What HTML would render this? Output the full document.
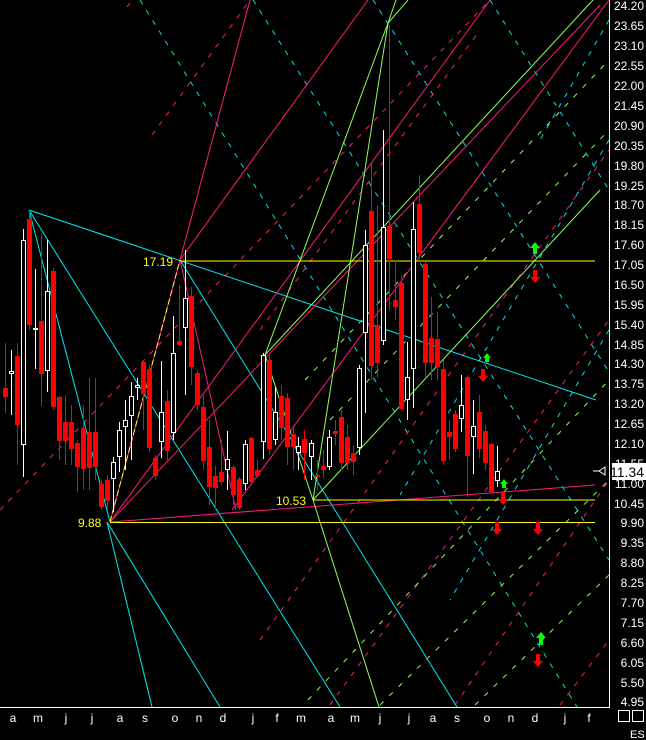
<!DOCTYPE html>
<html><head><meta charset="utf-8"><style>
html,body{margin:0;padding:0;background:#000;width:646px;height:740px;overflow:hidden}
svg{display:block}
text{font-family:"Liberation Sans",sans-serif}
</style></head><body>
<svg width="646" height="740" viewBox="0 0 646 740" xmlns="http://www.w3.org/2000/svg">
<rect width="646" height="740" fill="#000"/>
<g fill="none" stroke-width="1">
<!-- cyan dashed grid -->
<g stroke="#00e0e8" stroke-dasharray="5,7">
<line x1="140" y1="0" x2="577" y2="707"/>
<line x1="253" y1="0" x2="609" y2="560"/>
<line x1="373" y1="0" x2="609" y2="372"/>
<line x1="490" y1="0" x2="609" y2="190"/>
<line x1="609" y1="140" x2="400" y2="495"/>
<line x1="609" y1="330" x2="450" y2="600"/>
<line x1="609" y1="20" x2="540" y2="140"/>
</g>
<!-- pink dashed -->
<g stroke="#ff1a7a" stroke-dasharray="5,7">
<line x1="127" y1="7" x2="155" y2="-30"/>
<line x1="152" y1="135" x2="250" y2="0"/>
<line x1="0" y1="510" x2="490" y2="0"/>
<line x1="260" y1="640" x2="609" y2="150"/>
<line x1="330" y1="705" x2="609" y2="320"/>
<line x1="455" y1="705" x2="609" y2="480"/>
<line x1="560" y1="705" x2="609" y2="640"/>
<line x1="260" y1="330" x2="480" y2="30"/>
</g>
<!-- green dashed -->
<g stroke="#8cff5a" stroke-dasharray="5,8">
<line x1="308" y1="700" x2="609" y2="380"/>
<line x1="380" y1="705" x2="609" y2="480"/>
<line x1="475" y1="705" x2="609" y2="575"/>
<line x1="305" y1="380" x2="609" y2="60"/>
<line x1="330" y1="420" x2="609" y2="130"/>
</g>
<!-- cyan solid -->
<g stroke="#00e8f0">
<line x1="29" y1="210" x2="596" y2="400"/>
<line x1="29" y1="210" x2="110" y2="522"/>
<line x1="29" y1="210" x2="340" y2="707"/>
<line x1="107" y1="522" x2="152" y2="707"/>
<line x1="107" y1="522" x2="220" y2="707"/>
<line x1="180" y1="260" x2="457" y2="707"/>
</g>
<!-- pink solid -->
<g stroke="#ff1a7a">
<line x1="180" y1="260" x2="250" y2="0"/>
<line x1="180" y1="260" x2="368" y2="0"/>
<line x1="110" y1="522" x2="490" y2="0"/>
<line x1="232" y1="510" x2="609" y2="0"/>
<line x1="110" y1="522" x2="600" y2="5"/>
<line x1="110" y1="522" x2="595" y2="485"/>
<line x1="180" y1="260" x2="236" y2="510"/>
<line x1="110" y1="522" x2="180" y2="260"/>
</g>
<!-- green solid -->
<g stroke="#8cff5a">
<line x1="388" y1="23" x2="313" y2="500"/>
<line x1="388" y1="23" x2="265" y2="355"/>
<line x1="265" y1="355" x2="593" y2="0"/>
<line x1="313" y1="500" x2="600" y2="190"/>
<line x1="313" y1="500" x2="379" y2="707"/>
<line x1="388" y1="23" x2="396" y2="0"/>
<line x1="388" y1="23" x2="408" y2="0"/>
<line x1="265" y1="355" x2="313" y2="500"/>
</g>
<line x1="110" y1="522" x2="180" y2="260" stroke="#ffff40" stroke-dasharray="6,3"/>
<!-- yellow horizontals -->
<g stroke="#ffff00">
<line x1="180" y1="261" x2="595" y2="261"/>
<line x1="313" y1="500" x2="595" y2="500"/>
<line x1="110" y1="522.5" x2="595" y2="522.5"/>
</g>
</g>
<!-- candles -->
<g id="c" shape-rendering="crispEdges"></g>
<g shape-rendering="crispEdges">
<!-- white frame -->
<rect x="609" y="0" width="1" height="708" fill="#fff"/>
<rect x="0" y="707" width="610" height="1" fill="#fff"/>
</g>
<!-- arrows -->
<g>
<polygon points="535,242 530,248 533,248 533,254 537,254 537,248 540,248" fill="#00ff00"/>
<polygon points="535,283 530,277 533,277 533,270 537,270 537,277 540,277" fill="#ff0000"/>
<polygon points="487,353 483,358 485,358 485,362 489,362 489,358 491,358" fill="#00ff00"/>
<polygon points="483,382 478,376 481,376 481,369 485,369 485,376 488,376" fill="#ff0000"/>
<polygon points="504,479 500,484 502,484 502,488 506,488 506,484 508,484" fill="#00ff00"/>
<polygon points="503,505 498,499 501,499 501,492 505,492 505,499 508,499" fill="#ff0000"/>
<polygon points="497,535 492,529 495,529 495,522 499,522 499,529 502,529" fill="#ff0000"/>
<polygon points="538,535 533,529 536,529 536,522 540,522 540,529 543,529" fill="#ff0000"/>
<polygon points="541,632 536,638 539,638 539,645 543,645 543,638 546,638" fill="#00ff00"/>
<polygon points="538,667 533,661 536,661 536,654 540,654 540,661 543,661" fill="#ff0000"/>
</g>
<!-- labels -->
<g fill="#ffff00" font-size="12">
<text x="143" y="266">17.19</text>
<text x="78" y="527">9.88</text>
<text x="276" y="505">10.53</text>
</g>
<g fill="#fff" font-size="12" text-anchor="end">
<text x="644" y="10">24.20</text><text x="644" y="30">23.65</text><text x="644" y="50">23.10</text>
<text x="644" y="70">22.55</text><text x="644" y="90">22.00</text><text x="644" y="110">21.45</text>
<text x="644" y="130">20.90</text><text x="644" y="150">20.35</text><text x="644" y="170">19.80</text>
<text x="644" y="190">19.25</text><text x="644" y="209">18.70</text><text x="644" y="229">18.15</text>
<text x="644" y="249">17.60</text><text x="644" y="269">17.05</text><text x="644" y="289">16.50</text>
<text x="644" y="309">15.95</text><text x="644" y="329">15.40</text><text x="644" y="349">14.85</text>
<text x="644" y="368">14.30</text><text x="644" y="388">13.75</text><text x="644" y="408">13.20</text>
<text x="644" y="428">12.65</text><text x="644" y="448">12.10</text><text x="644" y="468">11.55</text>
<text x="644" y="488">11.00</text><text x="644" y="508">10.45</text><text x="644" y="527">9.90</text>
<text x="644" y="547">9.35</text><text x="644" y="567">8.80</text><text x="644" y="587">8.25</text>
<text x="644" y="607">7.70</text><text x="644" y="627">7.15</text><text x="644" y="647">6.60</text>
<text x="644" y="667">6.05</text><text x="644" y="687">5.50</text><text x="644" y="706">4.95</text>
</g>
<rect x="612" y="463" width="34" height="17" fill="#fff"/>
<text x="644" y="477" font-size="14" text-anchor="end" fill="#000">11.34</text>
<line x1="593" y1="471" x2="599" y2="471" stroke="#fff"/>
<polygon points="599,471 605,467 605,475" fill="none" stroke="#fff"/>
<rect x="618.5" y="710.5" width="11" height="11" fill="none" stroke="#fff"/>
<rect x="632.5" y="710.5" width="11" height="11" fill="none" stroke="#fff"/>
<text x="630" y="738" font-size="11" fill="#fff">ES</text>
<g fill="#fff" font-size="12" text-anchor="middle">
<text x="13" y="722">a</text><text x="38" y="722">m</text><text x="66" y="722">j</text>
<text x="92" y="722">j</text><text x="120" y="722">a</text><text x="145" y="722">s</text>
<text x="175" y="722">o</text><text x="199" y="722">n</text><text x="223" y="722">d</text>
<text x="253" y="722">j</text><text x="277" y="722">f</text><text x="301" y="722">m</text>
<text x="331" y="722">a</text><text x="355" y="722">m</text><text x="380" y="722">j</text>
<text x="409" y="722">j</text><text x="433" y="722">a</text><text x="457" y="722">s</text>
<text x="487" y="722">o</text><text x="511" y="722">n</text><text x="535" y="722">d</text>
<text x="565" y="722">j</text><text x="589" y="722">f</text>
</g>
</svg>
<script>
var d=[
[3,388,397,0,343,413],[9,371,374,1,350,415],[15,356,425,0,343,465],[21,240,445,1,229,477],
[27,219,325,0,210,330],[33,328,329,1,269,369],[39,321,374,0,234,406],[45,291,371,1,240,392],
[51,271,407,0,268,410],[57,397,441,0,396,460],[63,422,441,0,395,465],[69,422,449,0,405,465],
[75,443,467,0,440,492],[81,428,469,0,405,490],[87,432,468,0,378,490],[93,432,467,0,378,480],
[99,484,507,0,480,510],[105,480,501,0,475,510],[111,462,479,1,457,512],[117,430,457,1,422,472],
[123,420,427,1,400,470],[129,396,416,1,382,460],[135,385,388,1,378,400],[141,362,394,0,360,430],
[147,369,448,0,365,452],[153,458,476,0,455,480],[159,412,442,1,361,458],[165,401,451,0,390,460],
[171,353,433,1,316,440],[177,341,345,0,285,346],[183,298,328,1,250,395],[189,296,367,0,287,385],
[195,373,405,0,370,410],[201,407,461,0,395,470],[207,447,487,0,420,505],[213,476,488,0,466,510],
[219,472,482,0,440,485],[225,459,470,1,431,490],[231,467,495,0,465,505],[237,479,508,0,477,510],
[243,444,484,1,440,490],[249,438,482,0,437,485],[255,470,476,0,460,478],[261,355,442,1,353,459],
[267,360,449,0,355,455],[273,412,440,1,387,445],[279,396,428,0,385,440],[285,398,447,0,393,465],
[291,434,447,0,425,470],[296,446,453,1,437,470],[302,439,453,0,430,480],[309,443,457,1,440,480],
[315,475,477,0,460,490],[321,466,470,0,450,478],[327,437,467,1,430,470],[333,431,434,0,420,445],
[339,417,463,0,410,470],[345,437,463,0,425,470],[351,453,462,0,445,475],[357,368,448,1,365,455],
[363,245,333,1,230,413],[369,211,366,0,163,380],[375,325,363,0,205,378],[381,227,341,1,130,345],
[387,226,259,0,25,310],[393,300,307,0,260,320],[399,283,409,0,275,410],[405,377,400,1,342,420],
[411,229,369,1,202,408],[417,204,253,0,175,260],[423,264,363,0,262,378],[429,338,363,0,297,380],
[435,339,367,0,312,380],[441,369,461,0,360,465],[447,432,437,0,420,460],[453,414,449,0,410,452],
[459,405,419,1,375,432],[465,377,456,0,375,497],[471,426,437,1,400,474],[477,412,449,0,395,458],
[483,431,463,0,425,470],[489,444,492,0,443,493],[495,471,481,1,446,487]];
var g=document.getElementById('c'),ns='http://www.w3.org/2000/svg',h='';
d.forEach(function(c){var x=c[0],col=c[3]?'#fff':'#f00';
h+='<rect x="'+(x+2)+'" y="'+c[4]+'" width="1" height="'+(c[5]-c[4])+'" fill="'+col+'"/>';
if(c[3])h+='<rect x="'+(x+0.5)+'" y="'+(c[1]+0.5)+'" width="4" height="'+Math.max(1,c[2]-c[1]-1)+'" fill="#000" stroke="#fff"/>';
else h+='<rect x="'+x+'" y="'+c[1]+'" width="5" height="'+Math.max(2,c[2]-c[1])+'" fill="#f00"/>';});
g.innerHTML=h;
</script>
</body></html>
